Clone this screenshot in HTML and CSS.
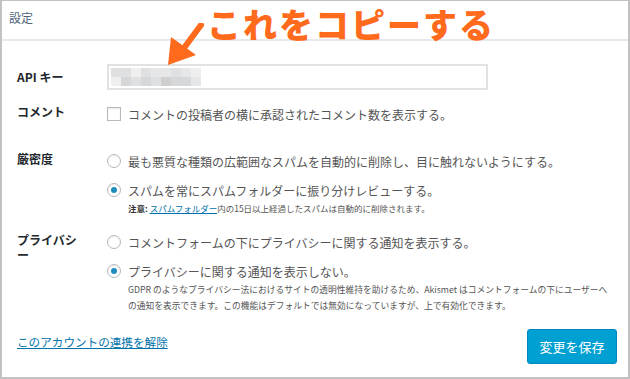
FILE: index.html
```html
<!DOCTYPE html>
<html lang="ja">
<head>
  <meta charset="UTF-8" />
  <title>Akismet 設定</title>
  <link rel="stylesheet" href="styles.css">
</head>
<body>
  <div class="card">
    <div class="card-header">設定</div>

    <!-- annotation over the screenshot -->
    <div class="note-mark">
      <span class="note-text">これをコピーする</span>
      <svg class="note-arrow" width="40" height="46" viewBox="0 0 40 46">
        <path d="M35 2 L15 29" stroke="#ff6a1c" stroke-width="6" stroke-linecap="round" fill="none" />
        <path d="M5 14 L2 42 L30 32 Z" fill="#ff6a1c" />
      </svg>
    </div>

    <form class="settings">
      <div class="row row-key">
        <label class="row-label">API キー</label>
        <div class="key-box">
          <div class="mosaic">
            <span class="s2"></span><span class="s2"></span><span class="s4"></span><span class="s2"></span><span class="s3"></span><span class="s3"></span><span class="s2"></span><span class="s3"></span><span class="s4"></span>
            <span class="s4"></span><span class="s1"></span><span class="s2"></span><span class="s1"></span><span class="s2"></span><span class="s0"></span><span class="s1"></span><span class="s1"></span><span class="s3"></span>
          </div>
        </div>
      </div>

      <div class="row row-comment">
        <div class="row-label">コメント</div>
        <div class="options">
          <label class="option"><span class="box"></span>コメントの投稿者の横に承認されたコメント数を表示する。</label>
        </div>
      </div>

      <div class="row row-strict">
        <div class="row-label">厳密度</div>
        <div class="options">
          <label class="option"><span class="radio"></span>最も悪質な種類の広範囲なスパムを自動的に削除し、目に触れないようにする。</label>
          <label class="option second"><span class="radio checked"></span>スパムを常にスパムフォルダーに振り分けレビューする。</label>
          <p class="hint"><strong>注意:</strong> <a href="#">スパムフォルダー</a>内の15日以上経過したスパムは自動的に削除されます。</p>
        </div>
      </div>

      <div class="row row-privacy">
        <div class="row-label narrow">プライバシー</div>
        <div class="options">
          <label class="option"><span class="radio"></span>コメントフォームの下にプライバシーに関する通知を表示する。</label>
          <label class="option second"><span class="radio checked"></span>プライバシーに関する通知を表示しない。</label>
          <p class="hint desc">GDPR のようなプライバシー法におけるサイトの透明性維持を助けるため、Akismet はコメントフォームの下にユーザーへ<br>の通知を表示できます。この機能はデフォルトでは無効になっていますが、上で有効化できます。</p>
        </div>
      </div>

      <div class="footer">
        <a href="#" class="unlink">このアカウントの連携を解除</a>
        <button type="button" class="save">変更を保存</button>
      </div>
    </form>
  </div>
</body>
</html>
```

FILE: styles.css
```css
* {
  margin: 0;
  padding: 0;
  box-sizing: border-box;
  font-family: "Noto Sans CJK JP", "Noto Sans", sans-serif;
}

body {
  background: #fff;
  width: 630px;
  height: 379px;
  overflow: hidden;
}

.card {
  position: relative;
  width: 630px;
  height: 379px;
  border: 2px solid #c2c2c2;
  border-top-width: 1px;
  background: #fff;
}

.card-header {
  height: 40px;
  padding-left: 7px;
  line-height: 33px;
  font-size: 12px;
  color: #50647a;
  border-bottom: 2px solid #e6eaee;
}

/* orange annotation */
.note-mark {
  position: absolute;
  left: 162px;
  top: 0;
}

.note-text {
  position: absolute;
  left: 43px;
  top: 0;
  white-space: nowrap;
  font-size: 34px;
  font-weight: 900;
  letter-spacing: 2px;
  line-height: 46px;
  color: #ff6a1c;
}

.note-arrow {
  position: absolute;
  left: 2px;
  top: 22px;
}

.settings {
  padding: 23px 11px 0 15px;
}

.row {
  display: grid;
  grid-template-columns: 90px 1fr;
  align-items: start;
}

.row-label {
  font-size: 12px;
  font-weight: bold;
  line-height: 15px;
  color: #23282d;
}

.row-label.narrow {
  width: 66px;
}

.row-key .row-label {
  line-height: 26px;
}

.key-box {
  width: 381px;
  height: 26px;
  border: 2px solid #e2e2e2;
  padding: 2px;
}

.mosaic {
  display: grid;
  grid-template-columns: repeat(9, 10px);
  grid-auto-rows: 9px;
  width: 90px;
}

.s0 { background: #cfcfcf; }
.s1 { background: #d6d7d8; }
.s2 { background: #dfe0e1; }
.s3 { background: #e6e7e8; }
.s4 { background: #efefef; }

.row-comment {
  margin-top: 14px;
}

.row-strict {
  margin-top: 27px;
}

.row-privacy {
  margin-top: 17px;
}

.options {
  display: flex;
  flex-direction: column;
}

.option {
  display: flex;
  align-items: center;
  height: 20px;
  font-size: 12px;
  color: #555;
  white-space: nowrap;
}

.option.second {
  margin-top: 9px;
}

.box,
.radio {
  width: 14px;
  height: 14px;
  margin-right: 7px;
  border: 1px solid #b4b9be;
  background: #fff;
  box-shadow: inset 0 1px 2px rgba(0, 0, 0, 0.08);
  flex-shrink: 0;
}

.radio {
  border-radius: 50%;
  display: flex;
  align-items: center;
  justify-content: center;
}

.radio.checked::after {
  content: "";
  width: 6px;
  height: 6px;
  border-radius: 50%;
  background: #1e8cbe;
}

.hint {
  margin-top: 1px;
  padding-left: 21px;
  font-size: 8.5px;
  line-height: 14px;
  color: #555;
  white-space: nowrap;
}

.hint strong {
  color: #333;
}

.hint a {
  color: #0073aa;
}

.hint.desc {
  font-size: 8.75px;
  line-height: 16px;
}

.footer {
  display: flex;
  justify-content: space-between;
  align-items: flex-start;
  margin-top: 15px;
}

.unlink {
  margin-top: 3px;
  font-size: 11.6px;
  line-height: 20px;
  color: #0073aa;
}

.save {
  width: 90px;
  height: 35px;
  background: #00a0d2;
  border: 1px solid #0087be;
  border-radius: 3px;
  color: #fff;
  font-size: 13px;
  cursor: pointer;
}
```
